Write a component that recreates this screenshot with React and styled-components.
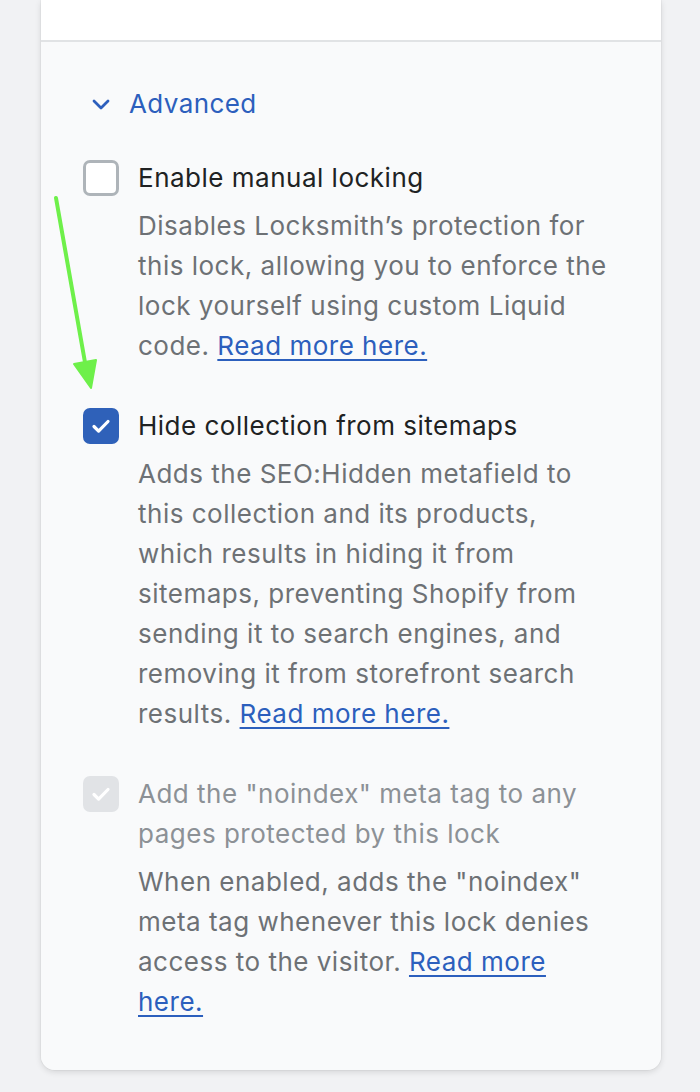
import React from 'react';
import styled, { createGlobalStyle } from 'styled-components';

const GlobalStyle = createGlobalStyle({
  body: {
    margin: 0,
    backgroundColor: '#f1f2f4',
    fontFamily: 'Inter, "Noto Sans", sans-serif',
    WebkitFontSmoothing: 'antialiased',
  },
});

const options = [
  {
    title: 'Enable manual locking',
    text: 'Disables Locksmith’s protection for this lock, allowing you to enforce the lock yourself using custom Liquid code.',
    state: 'off',
  },
  {
    title: 'Hide collection from sitemaps',
    text: 'Adds the SEO:Hidden metafield to this collection and its products, which results in hiding it from sitemaps, preventing Shopify from sending it to search engines, and removing it from storefront search results.',
    state: 'on',
  },
  {
    title: 'Add the "noindex" meta tag to any pages protected by this lock',
    text: 'When enabled, adds the "noindex" meta tag whenever this lock denies access to the visitor.',
    state: 'disabled',
  },
];

const CheckIcon = () => (
  <svg width='26' height='26' viewBox='0 0 26 26' fill='none'>
    <path d='M6 13.5l4.6 4.6L20 8.5' stroke='white' strokeWidth='3.2' strokeLinecap='round' strokeLinejoin='round' />
  </svg>
);

const App = () => (
  <>
    <GlobalStyle />
    <Page>
      <Card>
        <TopSection />
        <AdvancedSection>
          <Toggle>
            <svg width='20' height='14' viewBox='0 0 20 14' fill='none'>
              <path d='M3 4l7 7 7-7' stroke='#2c5fbd' strokeWidth='2.8' strokeLinecap='round' strokeLinejoin='round' />
            </svg>
            Advanced
          </Toggle>
          <OptionList>
            {options.map((option, key) => (
              <Option key={key}>
                <Box state={option.state}>{option.state !== 'off' && <CheckIcon />}</Box>
                <OptionBody>
                  <OptionTitle disabled={option.state === 'disabled'}>{option.title}</OptionTitle>
                  <OptionText>
                    {option.text} <MoreLink href='#'>Read more here.</MoreLink>
                  </OptionText>
                </OptionBody>
              </Option>
            ))}
          </OptionList>
        </AdvancedSection>
      </Card>
      <Arrow width='60' height='210' viewBox='0 0 60 210'>
        <path d='M6 6L36 176' stroke='#6ef04a' strokeWidth='4' strokeLinecap='round' />
        <path d='M24 172l22 -4l-5 28z' fill='#6ef04a' stroke='#6ef04a' strokeWidth='2' strokeLinejoin='round' />
      </Arrow>
    </Page>
  </>
);

export default App;

const Page = styled.div({
  position: 'relative',
  minHeight: 1092,
  padding: '0 39px 24px 41px',
  boxSizing: 'border-box',
});

const Card = styled.div({
  width: 620,
  borderRadius: '0 0 14px 14px',
  overflow: 'hidden',
  boxShadow: '0 2px 6px rgba(0, 0, 0, 0.12), 0 0 0 1px rgba(0, 0, 0, 0.03)',
});

const TopSection = styled.div({
  height: 40,
  backgroundColor: '#ffffff',
  borderBottom: '2px solid #e1e3e5',
});

const AdvancedSection = styled.div({
  backgroundColor: '#f9fafb',
  padding: '42px 42px 48px',
});

const Toggle = styled.div({
  display: 'flex',
  alignItems: 'center',
  gap: 18,
  paddingLeft: 8,
  fontSize: 26,
  lineHeight: '40px',
  letterSpacing: 0.4,
  color: '#2c5fbd',
});

const OptionList = styled.div({
  display: 'flex',
  flexDirection: 'column',
  gap: 40,
  marginTop: 34,
});

const Option = styled.div({
  display: 'flex',
  gap: 19,
});

const Box = styled.div(({ state }) => ({
  flex: 'none',
  width: 36,
  height: 36,
  marginTop: 2,
  boxSizing: 'border-box',
  borderRadius: 7,
  display: 'flex',
  alignItems: 'center',
  justifyContent: 'center',
  backgroundColor: state === 'on' ? '#2f61b9' : state === 'disabled' ? '#e1e3e6' : '#ffffff',
  border: state === 'off' ? '3px solid #aeb4b9' : 'none',
}));

const OptionBody = styled.div({
  display: 'flex',
  flexDirection: 'column',
  gap: 8,
  width: 476,
  fontSize: 26,
  lineHeight: '40px',
  letterSpacing: 0.5,
});

const OptionTitle = styled.div(({ disabled }) => ({
  color: disabled ? '#8c9196' : '#202223',
}));

const OptionText = styled.div({
  color: '#6d7175',
});

const MoreLink = styled.a({
  color: '#2c5fbd',
  textDecoration: 'underline',
  textUnderlineOffset: 4,
  textDecorationThickness: 2,
});

const Arrow = styled.svg({
  position: 'absolute',
  left: 50,
  top: 192,
});
